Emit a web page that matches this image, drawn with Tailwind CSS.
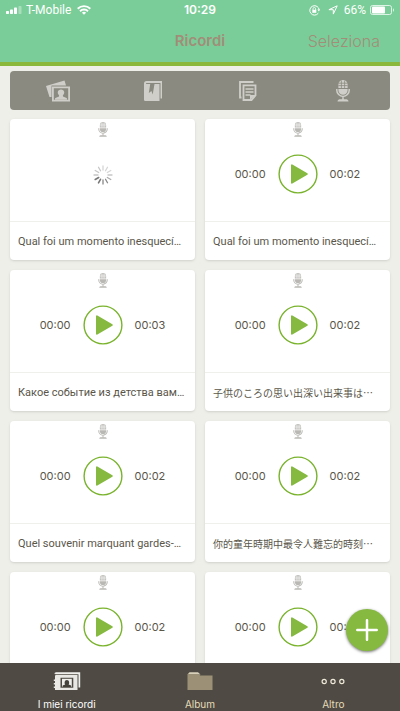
<!DOCTYPE html>
<html lang="it">
<head>
<meta charset="utf-8">
<meta name="viewport" content="width=device-width, initial-scale=1">
<title>Ricordi</title>
<script src="https://cdn.jsdelivr.net/npm/@tailwindcss/browser@4"></script>
</head>
<body class="flex h-screen flex-col overflow-hidden bg-[#efefea] font-['Inter','Noto_Sans_CJK_JP',sans-serif] text-[#5a564a]">

<svg class="hidden" aria-hidden="true">
  <symbol id="mic" viewBox="0 0 14 22">
    <path fill="currentColor" d="M7 0a4.6 4.6 0 0 1 4.6 4.6V8H2.400V4.600A4.600 4.600 0 0 1 7 0zM2.400 9h9.200v1.200a4.600 4.600 0 0 1-9.200 0z"/>
    <path fill="none" stroke="var(--grid)" stroke-width=".8" d="M5.400.5V8M8.600.5V8M2.400 3.200h9.200M2.400 5.600h9.200"/>
    <path fill="none" stroke="currentColor" stroke-width="1.500" d="M.8 9v1.200a6.200 6.200 0 0 0 12.400 0V9M7 16.400V20"/>
    <path fill="currentColor" d="M1.500 21.500c0-1.600 1.500-2.200 3-2.200h5c1.500 0 3 .6 3 2.200z"/>
  </symbol>
  <symbol id="play" viewBox="0 0 40 40">
    <circle cx="20" cy="20" r="18.900" fill="none" stroke="#7ab32e" stroke-width="1.400"/>
    <path d="M13.900 11.200v17.600l15-8.800z" fill="#86b940" stroke="#86b940" stroke-width="1.800" stroke-linejoin="round"/>
  </symbol>
</svg>

<header class="shrink-0 border-b-4 border-[#8ab83a] bg-[#7acd98]">
  <div class="grid h-5 grid-cols-3 items-center px-1.5 text-xs text-white">
    <div class="flex items-center gap-1 font-['Roboto',sans-serif] whitespace-nowrap">
      <svg class="h-2 w-4" viewBox="0 0 16 8" fill="#fff"><rect y="5" width="3" height="3" rx=".7"/><rect x="4" y="3.500" width="3" height="4.500" rx=".7"/><rect x="8" y="1.500" width="3" height="6.500" rx=".7"/><rect x="12.500" width="3" height="8" rx=".7" opacity=".35"/></svg>
      <span>T-Mobile</span>
      <svg class="ml-0.5 h-[10px] w-[14px]" viewBox="0 0 14 10" fill="none" stroke="#fff" stroke-width="1.900"><path d="M.7 3.700a9 9 0 0 1 12.600 0M3 6.200a5.700 5.700 0 0 1 8 0"/><path d="M7 9.800 4.900 7.700a3 3 0 0 1 4.200 0z" fill="#fff" stroke="none"/></svg>
    </div>
    <time class="text-center font-semibold">10:29</time>
    <div class="flex items-center justify-end font-['Roboto',sans-serif] whitespace-nowrap">
      <svg class="mr-2 h-[11px] w-[11px] shrink-0" viewBox="0 0 11 11" fill="none" stroke="#fff"><path d="M9.300 8.200A4.700 4.700 0 1 1 10.200 5"/><path d="M8.400 4.600h2.600L9.900 6.400z" fill="#fff" stroke="none"/><rect x="3.300" y="4.800" width="4" height="3" fill="#fff" stroke="none"/><path d="M4 5V3.800a1.300 1.300 0 0 1 2.600 0V5" stroke-width=".8"/></svg>
      <svg class="mr-1.5 h-[10px] w-[10px] shrink-0" viewBox="0 0 10 10" fill="none" stroke="#fff" stroke-linejoin="round"><path d="M9.200.8.900 4.700h4.400v4.400z"/></svg>
      <span>66%</span>
      <svg class="ml-1 h-[10px] w-6 shrink-0" viewBox="0 0 24 10"><rect x=".5" y=".5" width="21" height="9" rx="2" fill="none" stroke="#fff" stroke-opacity=".75"/><rect x="2" y="1.500" width="13" height="7" rx=".8" fill="#fff"/><path d="M23 3.200v3.600c1-.4 1-3.200 0-3.600z" fill="#fff"/></svg>
    </div>
  </div>
  <div class="grid h-[42px] grid-cols-3 items-center px-5 text-[#a18d78]">
    <h1 class="col-start-2 text-center text-[15px] font-semibold">Ricordi</h1>
    <button class="justify-self-end text-base font-light">Seleziona</button>
  </div>
</header>

<main class="min-h-0 flex-1 overflow-y-auto px-2.5 pt-[5px] [scrollbar-width:none]">
  <div class="grid h-[39px] grid-cols-4 rounded-sm bg-[#8b8a80] text-[#cfcec8] [--grid:#8b8a80]">
    <button class="flex items-center justify-center" aria-label="Foto">
      <svg class="h-[22px] w-6" viewBox="0 0 24 22"><path fill="currentColor" d="M0 6 18.500 .500 20 5.500H5.500V17H3.500z"/><path fill="currentColor" fill-rule="evenodd" d="M6 6.500h18V21.500H6zM7.800 8.300v11.400h14.400v-11.400z"/><path fill="currentColor" d="M9 19.800v-1.200c0-1.200 2.900-1.600 4-2.200l.1-1.200c-1-.8-1.500-2.100-1.300-3.200.2-1.800 1.500-2.600 3.200-2.600s3 .8 3.200 2.600c.2 1.100-.3 2.400-1.300 3.200l.1 1.200c1.100.6 4 1 4 2.200v1.200z"/></svg>
    </button>
    <button class="flex items-center justify-center" aria-label="Storie">
      <svg class="h-5 w-[18px]" viewBox="0 0 18 20"><path fill="currentColor" fill-rule="evenodd" d="M2.500 0H18v17.500h-1.500V2H3.200C2 2 2 2.500 2 3h13.500v17H1.200A1.200 1.200 0 0 1 0 18.800V2.500A2.500 2.500 0 0 1 2.500 0zM6.200 3 4.800 12l2.600-2 1.300 3.500L10.500 3z"/></svg>
    </button>
    <button class="flex items-center justify-center" aria-label="Note">
      <svg class="h-5 w-[18px]" viewBox="0 0 18 20" fill="none" stroke="currentColor"><path stroke-width="1.800" d="M14.500 1H1v15.500h1.500M4.500 4.400H16.500v10L12.500 19H4.500z"/><path stroke-width="1.500" d="M6.500 8h8M6.500 11h8M6.500 14h5"/><path fill="currentColor" stroke="none" d="M11 19v-5h6z"/></svg>
    </button>
    <button class="flex items-center justify-center" aria-label="Audio"><svg class="h-[22px] w-[14px]"><use href="#mic"/></svg></button>
  </div>

  <section class="grid grid-cols-2 gap-2.5 pt-[9px] text-[11px] [--grid:#fff]">
    <article class="h-[141px] min-w-0 rounded bg-white shadow-sm">
      <div class="flex h-[103px] flex-col items-center border-b border-[#efefec] pt-[3px]">
        <svg class="h-[15px] w-[10px] text-[#b9b8b4]"><use href="#mic"/></svg>
        <svg class="mt-7 h-5 w-5" viewBox="-10 -10 20 20" stroke-width="1.300" stroke-linecap="round" role="img" aria-label="Caricamento">
          <path stroke="#d6d6d6" d="M0-5v-4M2.500-4.300l2-3.500M4.300-2.500l3.500-2"/><path stroke="#c6c6c6" d="M5 0h4M-2.500-4.300l-2-3.500M-4.300-2.500l-3.500-2M-5 0h-4"/><path stroke="#aaa" d="M4.300 2.500l3.500 2"/><path stroke="#888" d="M2.500 4.300l2 3.500M0 5v4"/><path stroke="#777" stroke-width="1.600" d="M-2.500 4.300l-2 3.500M-4.300 2.500l-3.500 2"/>
        </svg>
      </div>
      <p class="px-2 font-['Roboto',sans-serif] leading-10 whitespace-nowrap">Qual foi um momento inesquecí…</p>
    </article>

    <article class="h-[141px] min-w-0 rounded bg-white shadow-sm">
      <div class="flex h-[103px] flex-col items-center border-b border-[#efefec] pt-[3px]">
        <svg class="h-[15px] w-[10px] text-[#b9b8b4]"><use href="#mic"/></svg>
        <div class="mt-[17px] flex items-center gap-3"><span>00:00</span><button aria-label="Riproduci"><svg class="block h-10 w-10"><use href="#play"/></svg></button><span>00:02</span></div>
      </div>
      <p class="px-2 font-['Roboto',sans-serif] leading-10 whitespace-nowrap">Qual foi um momento inesquecí…</p>
    </article>

    <article class="h-[141px] min-w-0 rounded bg-white shadow-sm">
      <div class="flex h-[103px] flex-col items-center border-b border-[#efefec] pt-[3px]">
        <svg class="h-[15px] w-[10px] text-[#b9b8b4]"><use href="#mic"/></svg>
        <div class="mt-[17px] flex items-center gap-3"><span>00:00</span><button aria-label="Riproduci"><svg class="block h-10 w-10"><use href="#play"/></svg></button><span>00:03</span></div>
      </div>
      <p class="px-2 font-['Roboto',sans-serif] leading-10 whitespace-nowrap" lang="ru">Какое событие из детства вам…</p>
    </article>

    <article class="h-[141px] min-w-0 rounded bg-white shadow-sm">
      <div class="flex h-[103px] flex-col items-center border-b border-[#efefec] pt-[3px]">
        <svg class="h-[15px] w-[10px] text-[#b9b8b4]"><use href="#mic"/></svg>
        <div class="mt-[17px] flex items-center gap-3"><span>00:00</span><button aria-label="Riproduci"><svg class="block h-10 w-10"><use href="#play"/></svg></button><span>00:02</span></div>
      </div>
      <p class="px-2 font-['Noto_Sans_CJK_JP',sans-serif] text-[10px] leading-10 whitespace-nowrap" lang="ja">子供のころの思い出深い出来事は⋯</p>
    </article>

    <article class="h-[141px] min-w-0 rounded bg-white shadow-sm">
      <div class="flex h-[103px] flex-col items-center border-b border-[#efefec] pt-[3px]">
        <svg class="h-[15px] w-[10px] text-[#b9b8b4]"><use href="#mic"/></svg>
        <div class="mt-[17px] flex items-center gap-3"><span>00:00</span><button aria-label="Riproduci"><svg class="block h-10 w-10"><use href="#play"/></svg></button><span>00:02</span></div>
      </div>
      <p class="px-2 font-['Roboto',sans-serif] leading-10 whitespace-nowrap" lang="fr">Quel souvenir marquant gardes-…</p>
    </article>

    <article class="h-[141px] min-w-0 rounded bg-white shadow-sm">
      <div class="flex h-[103px] flex-col items-center border-b border-[#efefec] pt-[3px]">
        <svg class="h-[15px] w-[10px] text-[#b9b8b4]"><use href="#mic"/></svg>
        <div class="mt-[17px] flex items-center gap-3"><span>00:00</span><button aria-label="Riproduci"><svg class="block h-10 w-10"><use href="#play"/></svg></button><span>00:02</span></div>
      </div>
      <p class="px-2 font-['Noto_Sans_CJK_TC',sans-serif] text-[10px] leading-10 whitespace-nowrap" lang="zh-Hant">你的童年時期中最令人難忘的時刻⋯</p>
    </article>

    <article class="h-[141px] min-w-0 rounded bg-white shadow-sm">
      <div class="flex h-[103px] flex-col items-center border-b border-[#efefec] pt-[3px]">
        <svg class="h-[15px] w-[10px] text-[#b9b8b4]"><use href="#mic"/></svg>
        <div class="mt-[17px] flex items-center gap-3"><span>00:00</span><button aria-label="Riproduci"><svg class="block h-10 w-10"><use href="#play"/></svg></button><span>00:02</span></div>
      </div>
    </article>

    <article class="h-[141px] min-w-0 rounded bg-white shadow-sm">
      <div class="flex h-[103px] flex-col items-center border-b border-[#efefec] pt-[3px]">
        <svg class="h-[15px] w-[10px] text-[#b9b8b4]"><use href="#mic"/></svg>
        <div class="mt-[17px] flex items-center gap-3"><span>00:00</span><button aria-label="Riproduci"><svg class="block h-10 w-10"><use href="#play"/></svg></button><span>00:02</span></div>
      </div>
    </article>
  </section>
</main>

<button class="fixed right-3 bottom-[60px] flex h-[42px] w-[42px] items-center justify-center rounded-full bg-[#86b940] shadow-[0_1px_3px_rgba(0,0,0,0.55)]" aria-label="Aggiungi">
  <svg class="h-[22px] w-[22px]" viewBox="0 0 22 22" stroke="#fff" stroke-width="2.500" stroke-linecap="round"><path d="M11 1.300v19.400M1.300 11h19.400"/></svg>
</button>

<nav class="grid h-12 shrink-0 grid-cols-3 bg-[#4f4b44] text-[10px] leading-3 text-[#e6dcb8]">
  <a href="#ricordi" class="flex flex-col items-center pt-2 text-white" aria-current="page">
    <svg class="mb-[7px] h-5 w-7" viewBox="0 0 28 20"><path d="M3 1.200h24.200V16.500h-1.700V3.200H3z" fill="#f0efec"/><path fill="#e9e8e4" fill-rule="evenodd" d="M2 5.200c0-.8.5-1.200 1.200-1.200H24.500V19H2v-2H.8v-1.500H2v-2H.8V12H2v-2H.8V8.500H2zM7.500 6.800v10h12.800v-10z"/><path fill="#f0efec" d="M9 7.800h9.800v8H9z"/><path fill="#45413b" d="M9.600 16v-1.200c.7-.8 2-.9 2.600-1.300-.9-1-1-4.500 1.700-4.500s2.600 3.500 1.700 4.500c.6.400 2 .5 2.600 1.300V16z"/><path fill="#e9e8e4" d="M1.500 3c0-1 .5-1.800 1.500-1.800v2z"/></svg>
    <span>I miei ricordi</span>
  </a>
  <a href="#album" class="flex flex-col items-center pt-2">
    <svg class="mb-[7px] h-5 w-[26px]" viewBox="0 0 26 20"><path d="M.5 3.500 2.500 1.200H11l2.500 2.300z" fill="#d8d0b8"/><path d="M.5 3.300h11l1.800 1.200h12.200V19H.5z" fill="#9c9176"/></svg>
    <span>Album</span>
  </a>
  <a href="#altro" class="flex flex-col items-center pt-2">
    <svg class="mb-[7px] h-5 w-6" viewBox="0 0 24 20" fill="none" stroke="#efe9da" stroke-width="1.200"><circle cx="3.200" cy="10.500" r="2.100"/><circle cx="12" cy="10.500" r="2.100"/><circle cx="20.800" cy="10.500" r="2.100"/></svg>
    <span>Altro</span>
  </a>
</nav>
</body>
</html>
